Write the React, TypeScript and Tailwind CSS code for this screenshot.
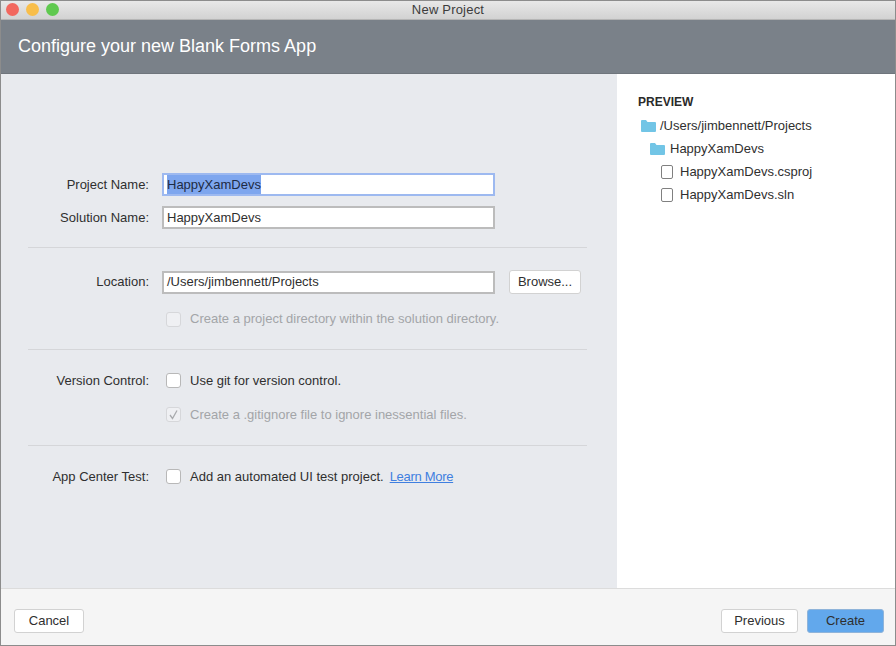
function Label({ children }: { children: string }) {
  return <div className="w-[148px] shrink-0 text-right text-[13px] text-[#2f2f2f]">{children}</div>;
}

function Field({ value, focused }: { value: string; focused?: boolean }) {
  return (
    <div
      className={
        focused
          ? "ml-[13px] flex h-[23px] w-[333px] items-center border-2 border-[#9db9f0] bg-white pl-[3px] text-[13px] text-[#2f2f2f]"
          : "ml-[13px] flex h-[23px] w-[333px] items-center border-2 border-[#bcbcbc] bg-white pl-[3px] text-[13px] text-[#2f2f2f]"
      }
    >
      {focused ? <span className="bg-[#7ea6ee] text-[#1d2b44]">{value}</span> : value}
    </div>
  );
}

function Check({ disabled, checked, children }: { disabled?: boolean; checked?: boolean; children: React.ReactNode }) {
  return (
    <div className="ml-[13px] flex h-[16px] items-center">
      <div
        className={
          disabled
            ? "ml-[4px] flex h-[15px] w-[15px] items-center justify-center rounded-[3px] border border-[#d6d7da] bg-[#eff0f3]"
            : "ml-[4px] flex h-[15px] w-[15px] items-center justify-center rounded-[3px] border border-[#b8b8b8] bg-white"
        }
      >
        {checked && (
          <svg width="11" height="11" viewBox="0 0 11 11" fill="none">
            <path d="M2 6 L4.5 9.5 L9 1.5" stroke="#a9abae" strokeWidth="1.3" />
          </svg>
        )}
      </div>
      <div className={disabled ? "ml-[9px] text-[13px] text-[#a3a5a8]" : "ml-[9px] text-[13px] text-[#2f2f2f]"}>{children}</div>
    </div>
  );
}

function Button({ children, w, primary }: { children: string; w: string; primary?: boolean }) {
  return (
    <div
      className={`flex h-[24px] items-center justify-center rounded-[3px] border text-[13px] text-[#2f2f2f] ${w} ${
        primary ? "border-[#8fb4da] bg-[#62a8ec]" : "border-[#d2d2d2] bg-white"
      }`}
    >
      {children}
    </div>
  );
}

function Folder() {
  return (
    <svg width="15" height="12" viewBox="0 0 15 12" className="shrink-0">
      <path d="M0 1 Q0 0 1 0 H5 L6.5 2 H14 Q15 2 15 3 V11 Q15 12 14 12 H1 Q0 12 0 11 Z" fill="#72c5e6" />
    </svg>
  );
}

function FileIcon() {
  return (
    <svg width="12" height="14" viewBox="0 0 12 14" className="shrink-0">
      <rect x="0.5" y="0.5" width="11" height="13" rx="1.5" fill="white" stroke="#808080" />
    </svg>
  );
}

export default function App() {
  return (
    <div className="flex h-[646px] w-[896px] flex-col overflow-hidden border border-[#8c8c8c] font-['Liberation_Sans',sans-serif]">
      <div className="relative flex h-[19px] shrink-0 items-center justify-center border-b border-[#b5b5b5] bg-gradient-to-b from-[#e8e8e8] to-[#d2d2d2] text-[13px] tracking-[0.2px] text-[#3c3c3c]">
        <div className="absolute left-[5px] top-[2px] flex gap-[7px]">
          <div className="h-[13px] w-[13px] rounded-full bg-[#f2675e]" />
          <div className="h-[13px] w-[13px] rounded-full bg-[#f8be4a]" />
          <div className="h-[13px] w-[13px] rounded-full bg-[#5fc94f]" />
        </div>
        New Project
      </div>
      <div className="flex h-[54px] shrink-0 items-center border-b border-[#6f757c] bg-[#7a8189] pl-[17px] text-[18px] text-white">
        Configure your new Blank Forms App
      </div>
      <div className="flex min-h-0 flex-1">
        <div className="w-[616px] shrink-0 bg-[#e8eaee] pt-[99px]">
          <div className="flex items-center">
            <Label>Project Name:</Label>
            <Field value="HappyXamDevs" focused />
          </div>
          <div className="mt-[10px] flex items-center">
            <Label>Solution Name:</Label>
            <Field value="HappyXamDevs" />
          </div>
          <div className="ml-[27px] mt-[18px] h-px w-[559px] bg-[#d5d6d9]" />
          <div className="mt-[22px] flex items-center">
            <Label>Location:</Label>
            <Field value="/Users/jimbennett/Projects" />
            <div className="ml-[14px]">
              <Button w="w-[72px]">Browse...</Button>
            </div>
          </div>
          <div className="mt-[17px] flex items-center">
            <div className="w-[148px] shrink-0" />
            <Check disabled>Create a project directory within the solution directory.</Check>
          </div>
          <div className="ml-[27px] mt-[22px] h-px w-[559px] bg-[#d5d6d9]" />
          <div className="mt-[21px] flex items-center">
            <Label>Version Control:</Label>
            <Check>Use git for version control.</Check>
          </div>
          <div className="mt-[16px] flex items-center">
            <div className="w-[148px] shrink-0" />
            <Check disabled checked>Create a .gitignore file to ignore inessential files.</Check>
          </div>
          <div className="ml-[27px] mt-[22px] h-px w-[559px] bg-[#d5d6d9]" />
          <div className="mt-[21px] flex items-center">
            <Label>App Center Test:</Label>
            <Check>
              Add an automated UI test project.
              <span className="ml-[6px] tracking-[-0.3px] text-[#3f7fe0] underline">Learn More</span>
            </Check>
          </div>
        </div>
        <div className="flex-1 bg-white pl-[21px] pt-[19px] text-[13px] text-[#2f2f2f]">
          <div className="text-[12px] font-bold text-[#2a2a2a]">PREVIEW</div>
          <div className="mt-[3px] flex h-[23px] items-center pl-[3px]">
            <Folder />
            <span className="ml-[4px]">/Users/jimbennett/Projects</span>
          </div>
          <div className="flex h-[23px] items-center pl-[12px]">
            <Folder />
            <span className="ml-[5px]">HappyXamDevs</span>
          </div>
          <div className="flex h-[23px] items-center pl-[23px]">
            <FileIcon />
            <span className="ml-[7px]">HappyXamDevs.csproj</span>
          </div>
          <div className="flex h-[23px] items-center pl-[23px]">
            <FileIcon />
            <span className="ml-[7px]">HappyXamDevs.sln</span>
          </div>
        </div>
      </div>
      <div className="flex h-[57px] shrink-0 items-start justify-between border-t border-[#dcdcdc] bg-[#f5f5f5] pl-[13px] pr-[11px] pt-[20px]">
        <Button w="w-[70px]">Cancel</Button>
        <div className="flex gap-[9px]">
          <Button w="w-[77px]">Previous</Button>
          <Button w="w-[77px]" primary>Create</Button>
        </div>
      </div>
    </div>
  );
}
